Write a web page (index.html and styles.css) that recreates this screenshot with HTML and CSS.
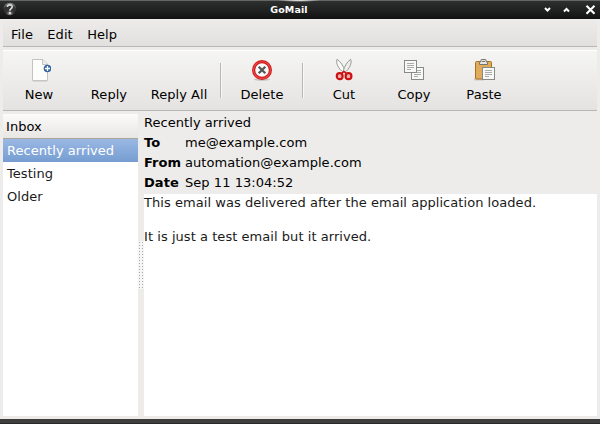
FILE: index.html
```html
<!DOCTYPE html>
<html lang="en">
<head>
<meta charset="utf-8">
<title>GoMail</title>
<link rel="stylesheet" href="styles.css">
</head>
<body>
<div class="window">
  <header class="titlebar">
    <svg class="app-icon" width="14" height="14" viewBox="0 0 14 14">
      <defs><radialGradient id="orb" cx="50%" cy="90%" r="90%"><stop offset="0" stop-color="#999"/><stop offset=".35" stop-color="#333"/><stop offset=".7" stop-color="#333"/><stop offset="1" stop-color="#999"/></radialGradient></defs>
      <circle cx="6.8" cy="7" r="6.2" fill="url(#orb)"/>
      <path d="M4.3 4.8C4.6 2.2 9.4 2.2 9.2 4.9C9.1 6.7 6.9 6.6 6.8 8.8" fill="none" stroke="#ddd" stroke-width="1.6"/>
      <rect x="5.9" y="10" width="2" height="2" fill="#ddd"/>
    </svg>
    <span class="title">GoMail</span>
    <svg class="controls" width="56" height="12" viewBox="0 0 56 12" fill="none" stroke="#fff">
      <path d="M2 4L4.5 6.5L7 4" stroke-width="2"/>
      <path d="M21 7.5L23.5 5L26 7.5" stroke-width="2"/>
      <path d="M43.5 1.8L51.5 9.8M51.5 1.8L43.5 9.8" stroke-width="2.1"/>
    </svg>
  </header>
  <nav class="menubar"><span>File</span><span>Edit</span><span>Help</span></nav>
  <div class="toolbar">
    <div class="tool">
      <svg width="24" height="24" viewBox="0 0 24 24">
        <path d="M5.5 1.5H16L20.5 6V22.5H5.5Z" fill="#fdfdfc" stroke="#c3c3bf"/>
        <path d="M6 23.3H20" stroke="#d4d3d0"/>
        <path d="M15.5 1.5V6.5H20.5" fill="#eee" stroke="#c3c3bf"/>
        <circle cx="20.5" cy="10.5" r="3.8" fill="#3465a4"/>
        <path d="M20.5 8V13M18 10.5H23" stroke="#fff" stroke-width="1.3"/>
      </svg>
      <span>New</span>
    </div>
    <div class="tool"><span>Reply</span></div>
    <div class="tool"><span>Reply All</span></div>
    <div class="sep"></div>
    <div class="tool">
      <svg width="24" height="24" viewBox="0 0 24 24">
        <ellipse cx="12" cy="21.5" rx="8" ry="1.5" fill="#c9c8c6"/>
        <circle cx="12" cy="12" r="8.4" fill="#fafafa" stroke="#cc1c1c" stroke-width="3.2"/>
        <circle cx="12" cy="12" r="8.5" fill="none" stroke="#ee4444" stroke-width="1.2"/>
        <path d="M8.7 8.7L15.3 15.3M15.3 8.7L8.7 15.3" stroke="#555753" stroke-width="2.3"/>
      </svg>
      <span>Delete</span>
    </div>
    <div class="sep"></div>
    <div class="tool">
      <svg width="24" height="24" viewBox="0 0 24 24">
        <path d="M5 1.3C3.7 5 6 10.5 12 15L13 13C11.5 8 8.5 3.5 5 1.3Z" fill="#fbfbfa" stroke="#999b96"/>
        <path d="M18.7 1.3C20 5 18 10.5 12.2 15L11.2 13C12.6 8 15.4 3.5 18.7 1.3Z" fill="#eeeeec" stroke="#999b96"/>
        <path d="M9.5 15.5L12 13.5L14.5 15.5" fill="none" stroke="#cc1010" stroke-width="1.6"/>
        <ellipse cx="7.7" cy="18.2" rx="2.9" ry="3" fill="#f5dddd" stroke="#cc1010" stroke-width="2.2"/>
        <ellipse cx="16.5" cy="18.2" rx="2.9" ry="3" fill="#f5dddd" stroke="#cc1010" stroke-width="2.2"/>
        <circle cx="7.7" cy="18.2" r="1" fill="none" stroke="#d65555" stroke-width=".5"/>
        <circle cx="16.5" cy="18.2" r="1" fill="none" stroke="#d65555" stroke-width=".5"/>
      </svg>
      <span>Cut</span>
    </div>
    <div class="tool">
      <svg width="24" height="24" viewBox="0 0 24 24">
        <rect x="9.5" y="9.5" width="12" height="12" fill="#f8f8f7" stroke="#888a85"/>
        <path d="M12 12.5H19M12 14.5H19M12 16.5H19M12 18.5H16" stroke="#aaaca7"/>
        <rect x="2.5" y="2.5" width="12" height="12" fill="#f8f8f7" stroke="#888a85"/>
        <path d="M5 5.5H12M5 7.5H12M5 9.5H12M5 11.5H9" stroke="#aaaca7"/>
      </svg>
      <span>Copy</span>
    </div>
    <div class="tool">
      <svg width="24" height="24" viewBox="0 0 24 24">
        <path d="M2 21.5H12" stroke="#c9c8c6" stroke-width="2"/>
        <rect x="3.5" y="3.5" width="16" height="17.5" rx="1" fill="#e2ab5c" stroke="#a9701d"/>
        <path d="M7.5 6.5V4.5L9 3.5V2Q9 1.5 9.5 1.5H13.5Q14 1.5 14 2V3.5L15.5 4.5V6.5Z" fill="#e6e6e4" stroke="#73756f"/>
        <path d="M10 3.5H13" stroke="#73756f"/>
        <rect x="10.5" y="9.5" width="12" height="12" fill="#f8f8f7" stroke="#888a85"/>
        <path d="M13 12.5H20M13 14.5H20M13 16.5H20M13 18.5H17" stroke="#aaaca7"/>
      </svg>
      <span>Paste</span>
    </div>
  </div>
  <main class="panes">
    <aside class="folders">
      <div class="folder-head">Inbox</div>
      <div class="row selected">Recently arrived</div>
      <div class="row">Testing</div>
      <div class="row">Older</div>
    </aside>
    <div class="splitter"><div class="grip"></div></div>
    <section class="message">
      <div class="subject">Recently arrived</div>
      <dl class="fields">
        <dt>To</dt><dd>me@example.com</dd>
        <dt>From</dt><dd>automation@example.com</dd>
        <dt>Date</dt><dd>Sep 11 13:04:52</dd>
      </dl>
      <div class="body">This email was delivered after the email application loaded.

It is just a test email but it arrived.</div>
    </section>
  </main>
  <footer class="frame-bottom"></footer>
</div>
</body>
</html>
```
FILE: styles.css
```css
* { box-sizing: border-box; }
body { margin: 0; }
.window {
  width: 600px; height: 424px; overflow: hidden;
  display: flex; flex-direction: column;
  background: #edecea; color: #000;
  font: 13px/20px "DejaVu Sans", sans-serif;
  letter-spacing: .05px;
}
.titlebar {
  height: 19px; flex: none;
  display: grid; grid-template-columns: 60px 1fr 57px; align-items: center;
  background: radial-gradient(ellipse 22px 2px at 299px 0, #fff, transparent) no-repeat,
    linear-gradient(#656765 1px, #2e3030 1px, #121212);
}
.app-icon { margin: 0 0 1px 3px; }
.title {
  padding-right: 25px; text-align: center; color: #fff;
  font-size: 9.5px; font-weight: bold; line-height: 19px; letter-spacing: .1px;
}
.controls { display: block; }
.menubar {
  height: 28px; flex: none; margin: 0 3px; padding: 6px 8px 0;
  display: flex; gap: 14.4px;
  background: linear-gradient(#edecea, #e1e0de);
  border-bottom: 1px solid #b8b7b5;
}
.toolbar {
  height: 61px; flex: none; margin: 3px 3px 0; padding-left: 1px;
  display: flex;
  border-top: 1px solid #fff; border-bottom: 1px solid #b8b7b5;
  background: linear-gradient(#f5f5f4, #edecea 50%, #e4e3e1);
}
.tool {
  width: 70px; padding-bottom: 5px;
  display: flex; flex-direction: column; align-items: center; justify-content: flex-end;
  white-space: nowrap;
}
.tool svg { display: block; margin-bottom: 3px; }
.sep {
  width: 2px; height: 35px; margin: 12px 5px 0 6px; flex: none;
  border-left: 1px solid #b8b7b5; border-right: 1px solid #f8f8f8;
}
.sep ~ .sep { margin-left: 5px; }
.panes { flex: 1; min-height: 0; margin: 0 3px 3px; display: flex; }
.folders { width: 135px; margin-top: 3px; background: #fff; }
.folder-head {
  height: 25px; padding: 3px 3px 0;
  background: linear-gradient(#fbfbfa, #e7e6e3);
  border-bottom: 1px solid #a9a69c;
}
.row { height: 23px; padding: 2px 4px 0; color: #1a1a1a; }
.selected { color: #fff; background: linear-gradient(#9ab8e4, #769dd1); }
.splitter { width: 6px; display: flex; align-items: center; justify-content: center; }
.grip {
  width: 6px; height: 48px; margin-top: 2px;
  background: radial-gradient(circle at 1.5px 1.5px, #aaa 0 .7px, #f5f5f4 .8px) 0 0 / 3px 3px;
}
.message { flex: 1; display: flex; flex-direction: column; }
.subject { height: 23px; padding-top: 2px; }
.fields { margin: 0; display: grid; grid-template-columns: 41px 1fr; grid-auto-rows: 20px; line-height: 18px; }
.fields dt { font-weight: bold; }
.fields dd { margin: 0; }
.body { flex: 1; background: #fff; color: #1a1a1a; line-height: 17px; white-space: pre; }
.frame-bottom { height: 5px; flex: none; background: linear-gradient(#3d3e3d 4px, #292829 4px); }
```
